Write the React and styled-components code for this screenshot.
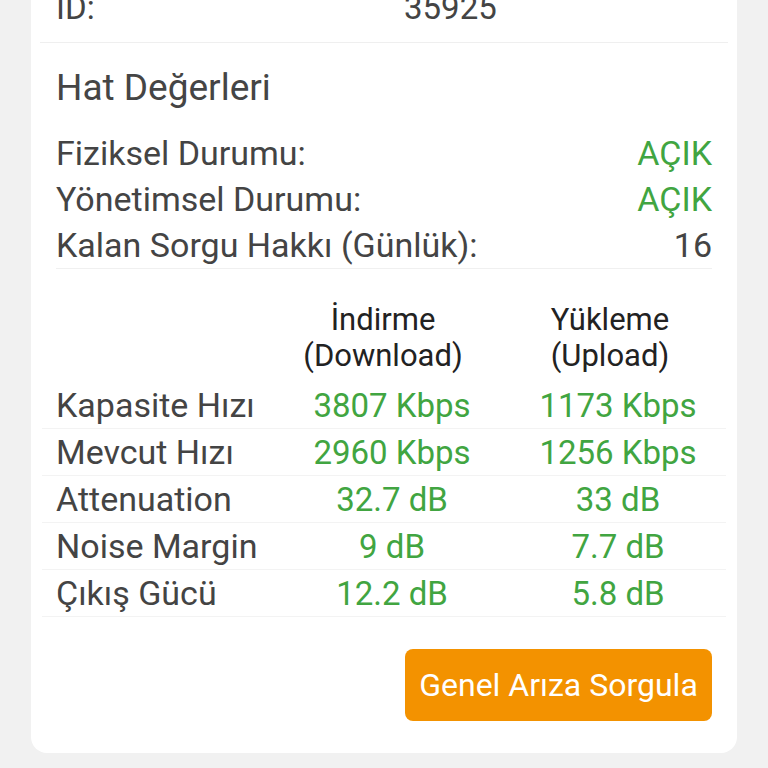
import React from 'react';
import styled, { createGlobalStyle } from 'styled-components';

const GlobalStyle = createGlobalStyle`
  html, body {
    margin: 0;
    padding: 0;
    background: #f1f1f1;
    font-family: Roboto, "Noto Sans", "Liberation Sans", sans-serif;
  }
`;

const Page = styled.div`
  height: 768px;
  overflow: hidden;
  padding: 0 31px;
  box-sizing: border-box;
`;

const Card = styled.div`
  margin-top: -15px;
  background: #fff;
  border-radius: 16px;
  padding: 0 25px 32px;
  display: flex;
  flex-direction: column;
`;

const TopRow = styled.div`
  display: grid;
  grid-template-columns: 348px 1fr;
  height: 46px;
  line-height: 46px;
  font-size: 33px;
  color: #444;
`;

const Divider = styled.div`
  height: 1px;
  background: ${p => p.$color || '#efefef'};
  margin: ${p => p.$wide ? '11px -16px 0' : '0'};
`;

const Heading = styled.h2`
  margin: 21px 0 0;
  font-size: 37px;
  font-weight: 400;
  line-height: 48px;
  color: #454545;
`;

const StatusList = styled.div`
  margin-top: 18px;
  display: flex;
  flex-direction: column;
`;

const StatusRow = styled.div`
  display: flex;
  justify-content: space-between;
  align-items: center;
  height: 46px;
  font-size: 34px;
  color: #444;
`;

const StatusValue = styled.span`
  color: ${p => p.$green ? '#41a541' : '#444'};
`;

const Table = styled.div`
  margin: 33px -14px 0;
  display: flex;
  flex-direction: column;
`;

const HeadRow = styled.div`
  display: grid;
  grid-template-columns: 230px 222px 1fr;
  margin-bottom: 8px;
`;

const HeadCell = styled.div`
  text-align: center;
  font-size: 31px;
  line-height: 36px;
  color: #222;
`;

const DataRow = styled.div`
  display: grid;
  grid-template-columns: 232px 236px 1fr;
  align-items: center;
  height: 47px;
  box-sizing: border-box;
  border-bottom: 1px solid #f3f3f3;
`;

const LabelCell = styled.div`
  padding-left: 14px;
  font-size: 34px;
  color: #444;
  white-space: nowrap;
`;

const ValueCell = styled.div`
  text-align: center;
  font-size: 33px;
  color: #41a541;
  white-space: nowrap;
`;

const Actions = styled.div`
  display: flex;
  justify-content: flex-end;
  margin-top: 32px;
`;

const Button = styled.button`
  width: 307px;
  height: 72px;
  padding: 0;
  border: none;
  border-radius: 8px;
  background: #f39200;
  color: #fff;
  font-family: Roboto, "Noto Sans", "Liberation Sans", sans-serif;
  font-size: 32px;
  font-weight: 400;
  white-space: nowrap;
  cursor: pointer;
`;

const statuses = [
  { label: 'Fiziksel Durumu:', value: 'AÇIK', green: true },
  { label: 'Yönetimsel Durumu:', value: 'AÇIK', green: true },
  { label: 'Kalan Sorgu Hakkı (Günlük):', value: '16', green: false },
];

const speeds = [
  ['Kapasite Hızı', '3807 Kbps', '1173 Kbps'],
  ['Mevcut Hızı', '2960 Kbps', '1256 Kbps'],
  ['Attenuation', '32.7 dB', '33 dB'],
  ['Noise Margin', '9 dB', '7.7 dB'],
  ['Çıkış Gücü', '12.2 dB', '5.8 dB'],
];

export default function App() {
  return (
    <>
      <GlobalStyle />
      <Page>
        <Card>
          <TopRow>
            <span>ID:</span>
            <span>35925</span>
          </TopRow>
          <Divider $wide />
          <Heading>Hat Değerleri</Heading>
          <StatusList>
            {statuses.map(s => (
              <StatusRow key={s.label}>
                <span>{s.label}</span>
                <StatusValue $green={s.green}>{s.value}</StatusValue>
              </StatusRow>
            ))}
          </StatusList>
          <Divider $color="#f0f0f0" />
          <Table>
            <HeadRow>
              <div />
              <HeadCell>İndirme<br />(Download)</HeadCell>
              <HeadCell>Yükleme<br />(Upload)</HeadCell>
            </HeadRow>
            {speeds.map(([label, down, up]) => (
              <DataRow key={label}>
                <LabelCell>{label}</LabelCell>
                <ValueCell>{down}</ValueCell>
                <ValueCell>{up}</ValueCell>
              </DataRow>
            ))}
          </Table>
          <Actions>
            <Button>Genel Arıza Sorgula</Button>
          </Actions>
        </Card>
      </Page>
    </>
  );
}
